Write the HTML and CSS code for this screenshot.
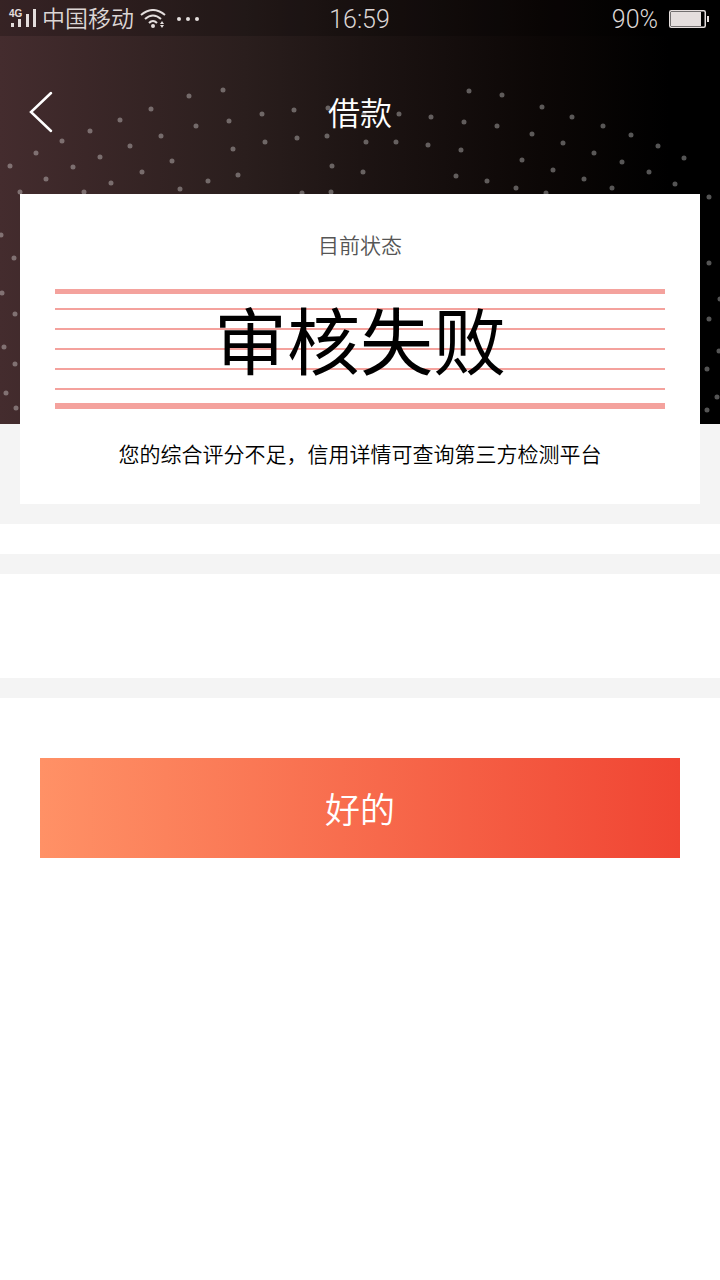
FILE: index.html
```
<!DOCTYPE html>
<html lang="zh-CN">
<head>
  <meta charset="UTF-8">
  <meta name="viewport" content="width=device-width, initial-scale=1">
  <title>借款</title>
  <link rel="stylesheet" href="styles.css">
</head>
<body>
  <header class="hero">
    <!-- Dotted wave background -->
    <svg class="hero-dots" viewBox="0 0 720 424" preserveAspectRatio="xMidYMin slice" aria-hidden="true">
      <path d="M10 166h0M20 192h0M36 153h0M46 179h0M62 141h0M73 167h0M84 192h0M90 131h0M100 157h0M111 183h0M120 120h0M130 146h0M142 172h0M151 109h0M161 136h0M172 161h0M180 189h0M189 96h0M196 126h0M208 181h0M223 90h0M229 121h0M233 149h0M238 175h0
        M262 114h0M265 142h0M294 110h0M297 138h0M302 193h0M327 136h0M328 108h0M332 166h0M331 192h0M363 172h0M366 142h0M364 114h0M399 114h0M396 142h0M431 117h0M428 145h0M469 91h0M464 122h0M461 150h0M456 176h0
        M502 95h0M497 126h0M487 181h0M542 107h0M532 134h0M522 160h0M516 188h0M572 117h0M563 143h0M553 170h0M546 193h0M603 126h0M594 153h0M584 179h0M631 135h0M622 162h0M612 188h0M658 146h0M649 172h0M684 158h0M675 184h0M709 197h0
        M1 235h0M14 258h0M2 293h0M15 314h0M4 347h0M15 364h0M6 393h0M16 408h0M709 263h0M720 299h0M709 319h0M719 351h0M707 369h0M717 397h0M707 410h0"/>
    </svg>

    <div class="status-bar">
      <div class="status-left">
        <svg class="signal" width="28" height="20" viewBox="0 0 28 20" aria-hidden="true">
          <text x="-1" y="8">4G</text>
          <path d="M1 14h3v4h-3zM8 10h3v8h-3zM16 5h3v13h-3zM23 0h3v18h-3z"/>
        </svg>
        <span class="carrier">中国移动</span>
        <svg class="wifi" width="26" height="20" viewBox="0 0 26 20" aria-hidden="true">
          <path class="wifi-arc" d="M1 6Q13 -4 25 6M5 10Q13 3 21 10M9 14Q13 10 17 14"/>
          <path d="M11 17a2 2 0 1 0 4 0a2 2 0 1 0-4 0zM20 15l2-3 2 3zM20 16h4l-2 3z"/>
        </svg>
        <svg class="more" width="24" height="4" viewBox="0 0 24 4" aria-hidden="true">
          <circle cx="2" cy="2" r="2"/><circle cx="11" cy="2" r="2"/><circle cx="20" cy="2" r="2"/>
        </svg>
      </div>
      <time class="clock">16:59</time>
      <div class="status-right">
        <span>90%</span>
        <svg class="battery" width="40" height="18" viewBox="0 0 40 18" aria-hidden="true">
          <rect class="battery-case" x=".75" y=".75" width="35.5" height="16.5" rx="1.5"/>
          <path d="M2 2h30v14h-30zM38 6h2v6h-2z"/>
        </svg>
      </div>
    </div>

    <nav class="nav-bar">
      <button class="back" type="button" aria-label="返回">
        <svg width="24" height="42" viewBox="0 0 24 42" aria-hidden="true">
          <path d="M22 2L2 21L22 40"/>
        </svg>
      </button>
      <h1>借款</h1>
    </nav>
  </header>

  <main>
    <section class="summary">
      <div class="card">
        <h2 class="card-label">目前状态</h2>
        <div class="result">
          <strong>审核失败</strong>
        </div>
        <p class="card-note">您的综合评分不足，信用详情可查询第三方检测平台</p>
      </div>
    </section>
    <div class="row row-short"></div>
    <div class="row row-tall"></div>
    <div class="actions">
      <button class="confirm" type="button">好的</button>
    </div>
  </main>
</body>
</html>
```
FILE: styles.css
```
* {
  box-sizing: border-box;
}
body {
  margin: 0;
  min-height: 100vh;
  background: #fff;
  color: #000;
  font-family: Roboto, "Noto Sans CJK SC", sans-serif;
  font-weight: 350;
}
h1, h2, p {
  margin: 0;
  font-weight: inherit;
}
button {
  border: none;
  font: inherit;
  cursor: pointer;
}
svg {
  display: block;
}

/* Header */
.hero {
  position: relative;
  padding-bottom: 236px;
  background: linear-gradient(90deg, #442c2e 0%, #2a1e1d 34%, #1d1413 50%, #0c0706 75%, #000 93%);
  color: #fff;
}
.hero-dots {
  position: absolute;
  top: 0;
  left: 0;
  width: 100%;
  height: 100%;
  fill: none;
  stroke: #fff;
  stroke-width: 5;
  stroke-linecap: round;
  opacity: 0.33;
}

/* Status bar */
.status-bar {
  position: relative;
  display: grid;
  grid-template-columns: 1fr auto 1fr;
  align-items: center;
  height: 36px;
  padding: 0 11px 0 10px;
  background: rgba(0, 0, 0, 0.2);
  color: #dcd6d5;
  font-size: 25px;
  line-height: 36px;
}
.status-bar svg {
  fill: #e4dedd;
}
.status-left,
.status-right {
  display: flex;
  align-items: center;
}
.status-right {
  justify-content: flex-end;
  gap: 11px;
}
.clock,
.carrier,
.status-right span {
  padding-top: 2px;
}
.signal {
  overflow: visible;
}
.signal text {
  font-family: "Liberation Sans", sans-serif;
  font-size: 10px;
  font-weight: 700;
}
.carrier {
  margin: 0 6px 0 4px;
  font-size: 23px;
}
.more {
  margin-left: 11px;
}
.wifi .wifi-arc {
  fill: none;
  stroke: #e4dedd;
  stroke-width: 2;
}
.battery .battery-case {
  fill: none;
  stroke: #e4dedd;
  stroke-width: 1.5;
}

/* Navigation */
.nav-bar {
  position: relative;
  display: grid;
  grid-template-columns: 80px 1fr 80px;
  align-items: center;
  height: 152px;
}
.nav-bar h1 {
  padding-top: 4px;
  font-size: 32px;
  line-height: 48px;
  text-align: center;
}
.back {
  padding: 12px 28px 12px 29px;
  background: none;
}
.back path {
  fill: none;
  stroke: #fff;
  stroke-width: 2.5;
  stroke-linecap: round;
}

/* Status card */
main {
  display: flow-root;
}
.summary {
  padding: 0 20px 20px;
  background: #f4f4f4;
}
.card {
  position: relative;
  margin-top: -230px;
  padding: 36px 35px 33px;
  background: #fff;
  text-align: center;
}
.card-label {
  color: #555;
  font-size: 21px;
  line-height: 32px;
}
/* Ruled lines behind the result */
.result {
  height: 120px;
  margin: 27px 0 30px;
  border-top: 5px solid #f4a29d;
  border-bottom: 6px solid #f4a29d;
  background: repeating-linear-gradient(transparent 0 14px, #f4a29d 14px 16px, transparent 16px 20px) no-repeat 0 0 / 100% 100px;
}
.result strong {
  display: block;
  font-size: 73px;
  font-weight: 400;
  line-height: 100px;
}
.card-note {
  font-size: 21px;
  line-height: 32px;
}

/* Empty rows */
.row {
  border-bottom: 20px solid #f4f4f4;
}
.row-short {
  height: 50px;
}
.row-tall {
  height: 124px;
}

/* Bottom button */
.actions {
  padding: 60px 40px;
}
.confirm {
  display: block;
  width: 100%;
  height: 100px;
  padding: 0 0 2px;
  background: linear-gradient(90deg, #ff9166, #f04533);
  color: #fff;
  font-size: 35px;
}
```
